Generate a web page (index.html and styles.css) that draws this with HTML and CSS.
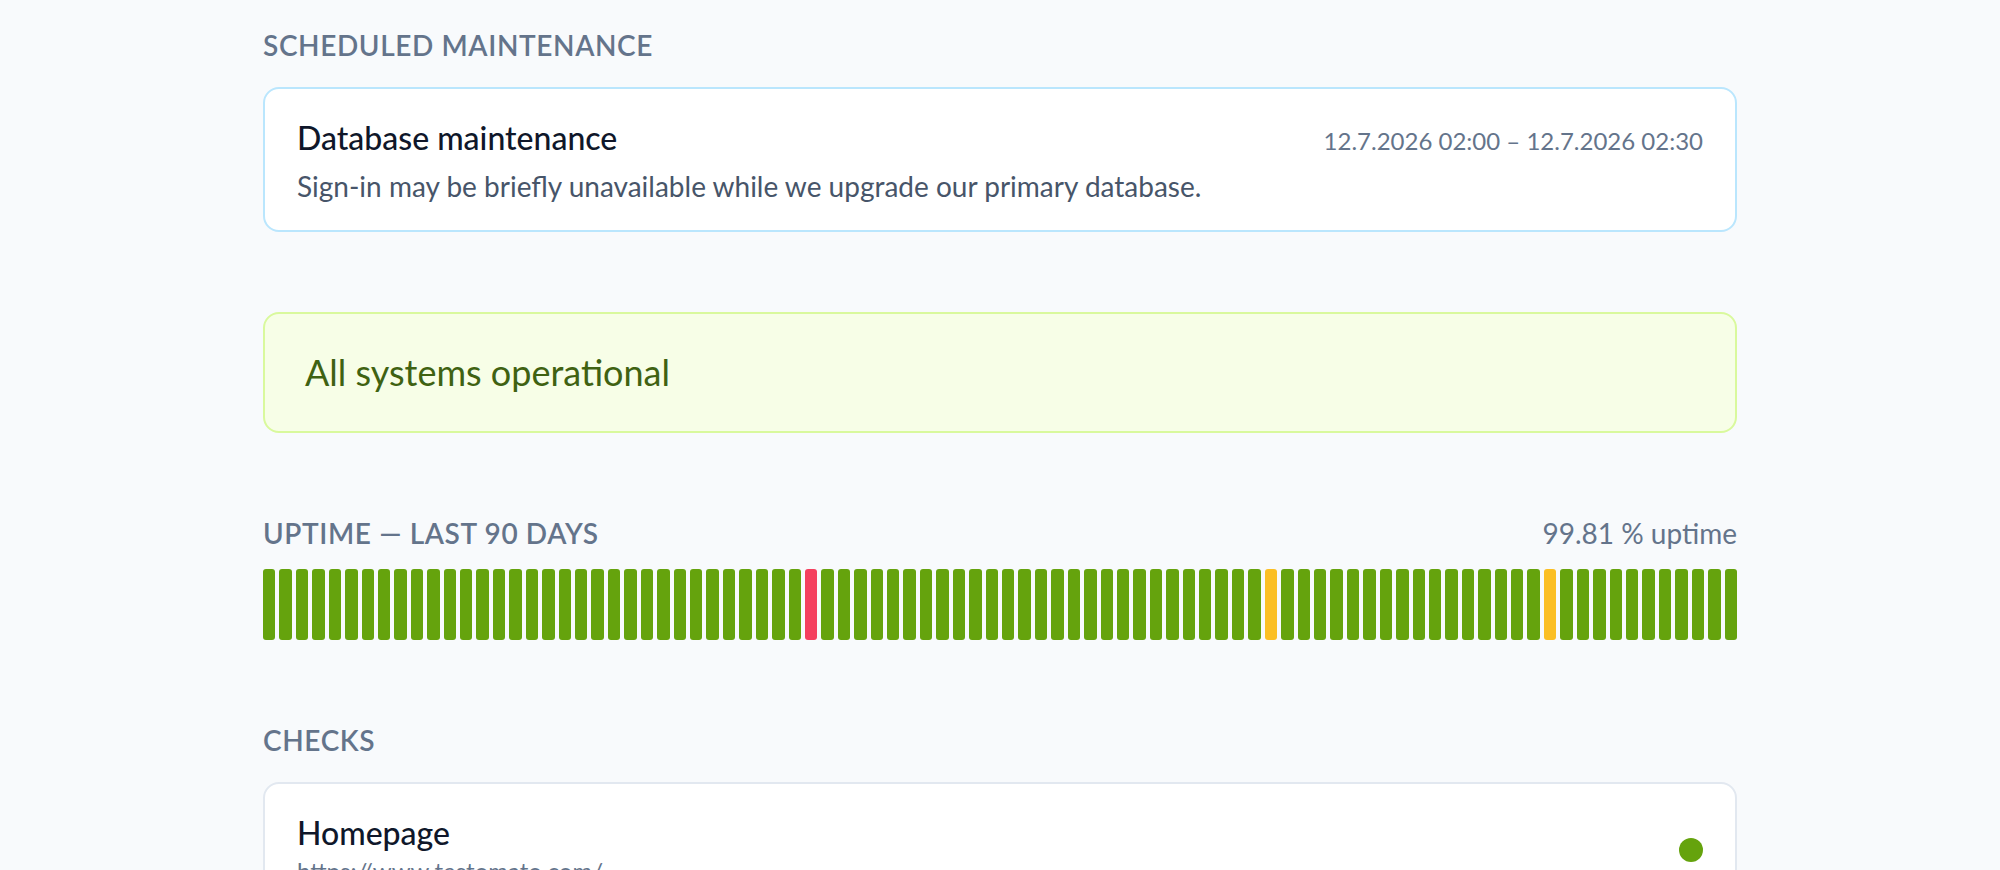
FILE: index.html
```html
<!DOCTYPE html>
<html lang="en">
<head>
  <meta charset="UTF-8" />
  <meta name="viewport" content="width=device-width, initial-scale=1.0"/>
  <title>Status</title>
  <link rel="stylesheet" href="styles.css">
</head>
<body>
  <main class="page">
    <section class="section">
      <h2 class="section-title">Scheduled maintenance</h2>
      <div class="card maintenance">
        <div class="maintenance-head">
          <div class="maintenance-title">Database maintenance</div>
          <div class="maintenance-time">12.7.2026 02:00 – 12.7.2026 02:30</div>
        </div>
        <div class="maintenance-text">Sign-in may be briefly unavailable while we upgrade our primary database.</div>
      </div>
    </section>

    <div class="banner">All systems operational</div>

    <section class="section">
      <div class="uptime-head">
        <h2 class="section-title">Uptime — last 90 days</h2>
        <span class="uptime-value">99.81 % uptime</span>
      </div>
      <div class="bars" id="bars"></div>
    </section>

    <section class="section">
      <h2 class="section-title">Checks</h2>
      <div class="card check">
        <div class="check-info">
          <div class="check-name">Homepage</div>
          <div class="check-url">https://www.testomato.com/</div>
        </div>
        <span class="dot"></span>
      </div>
    </section>
  </main>

  <script>
    // 90 days, oldest first
    const incidents = { 33: "down", 61: "warn", 78: "warn" };
    const bars = document.getElementById("bars");
    for (let i = 0; i < 90; i++) {
      const bar = document.createElement("div");
      bar.className = "bar " + (incidents[i] || "up");
      bars.appendChild(bar);
    }
  </script>
</body>
</html>
```

FILE: styles.css
```css
body {
  margin: 0;
  font-family: Lato, 'Noto Sans', sans-serif;
  background-color: #f8fafc;
  color: #0f172a;
}

.page {
  width: 1474px;
  margin: 0 auto;
  padding-top: 29px;
}

.section {
  margin-bottom: 84px;
}

.section-title {
  margin: 0 0 24px;
  font-size: 28px;
  font-weight: 600;
  letter-spacing: 0.022em;
  text-transform: uppercase;
  color: #64748b;
  line-height: 1.2;
}

.card {
  background-color: #fff;
  border: 2px solid #e2e8f0;
  border-radius: 16px;
  padding: 30px 32px 26px;
}

.maintenance {
  border-color: #bae6fd;
}

.maintenance-head {
  display: flex;
  justify-content: space-between;
  align-items: baseline;
}

.maintenance-title {
  font-size: 32px;
  font-weight: 500;
  line-height: 1.2;
}

.maintenance-time {
  font-size: 24px;
  color: #64748b;
}

.maintenance-text {
  margin-top: 13px;
  font-size: 28px;
  line-height: 1.2;
  color: #475569;
}

.banner {
  background-color: #f7fee7;
  border: 2px solid #d9f99d;
  border-radius: 16px;
  padding: 37px 40px;
  font-size: 36px;
  line-height: 1.2;
  color: #3f6212;
  margin: -4px 0 83px;
}

.uptime-head {
  display: flex;
  justify-content: space-between;
  align-items: baseline;
}

.uptime-head .section-title {
  margin-bottom: 19px;
}

.uptime-value {
  font-size: 28px;
  color: #64748b;
}

.bars {
  display: flex;
  gap: 4px;
  height: 71px;
}

.bar {
  flex: 1;
  border-radius: 3px;
}

.bar.up {
  background-color: #65a30d;
}

.bar.down {
  background-color: #f43f5e;
}

.bar.warn {
  background-color: #fbbf24;
}

.check {
  display: flex;
  justify-content: space-between;
  align-items: center;
}

.check-name {
  font-size: 32px;
  font-weight: 500;
  line-height: 1.2;
}

.check-url {
  margin-top: 5px;
  font-size: 24px;
  line-height: 1.2;
  color: #64748b;
}

.dot {
  width: 24px;
  height: 24px;
  border-radius: 50%;
  background-color: #65a30d;
}
```
